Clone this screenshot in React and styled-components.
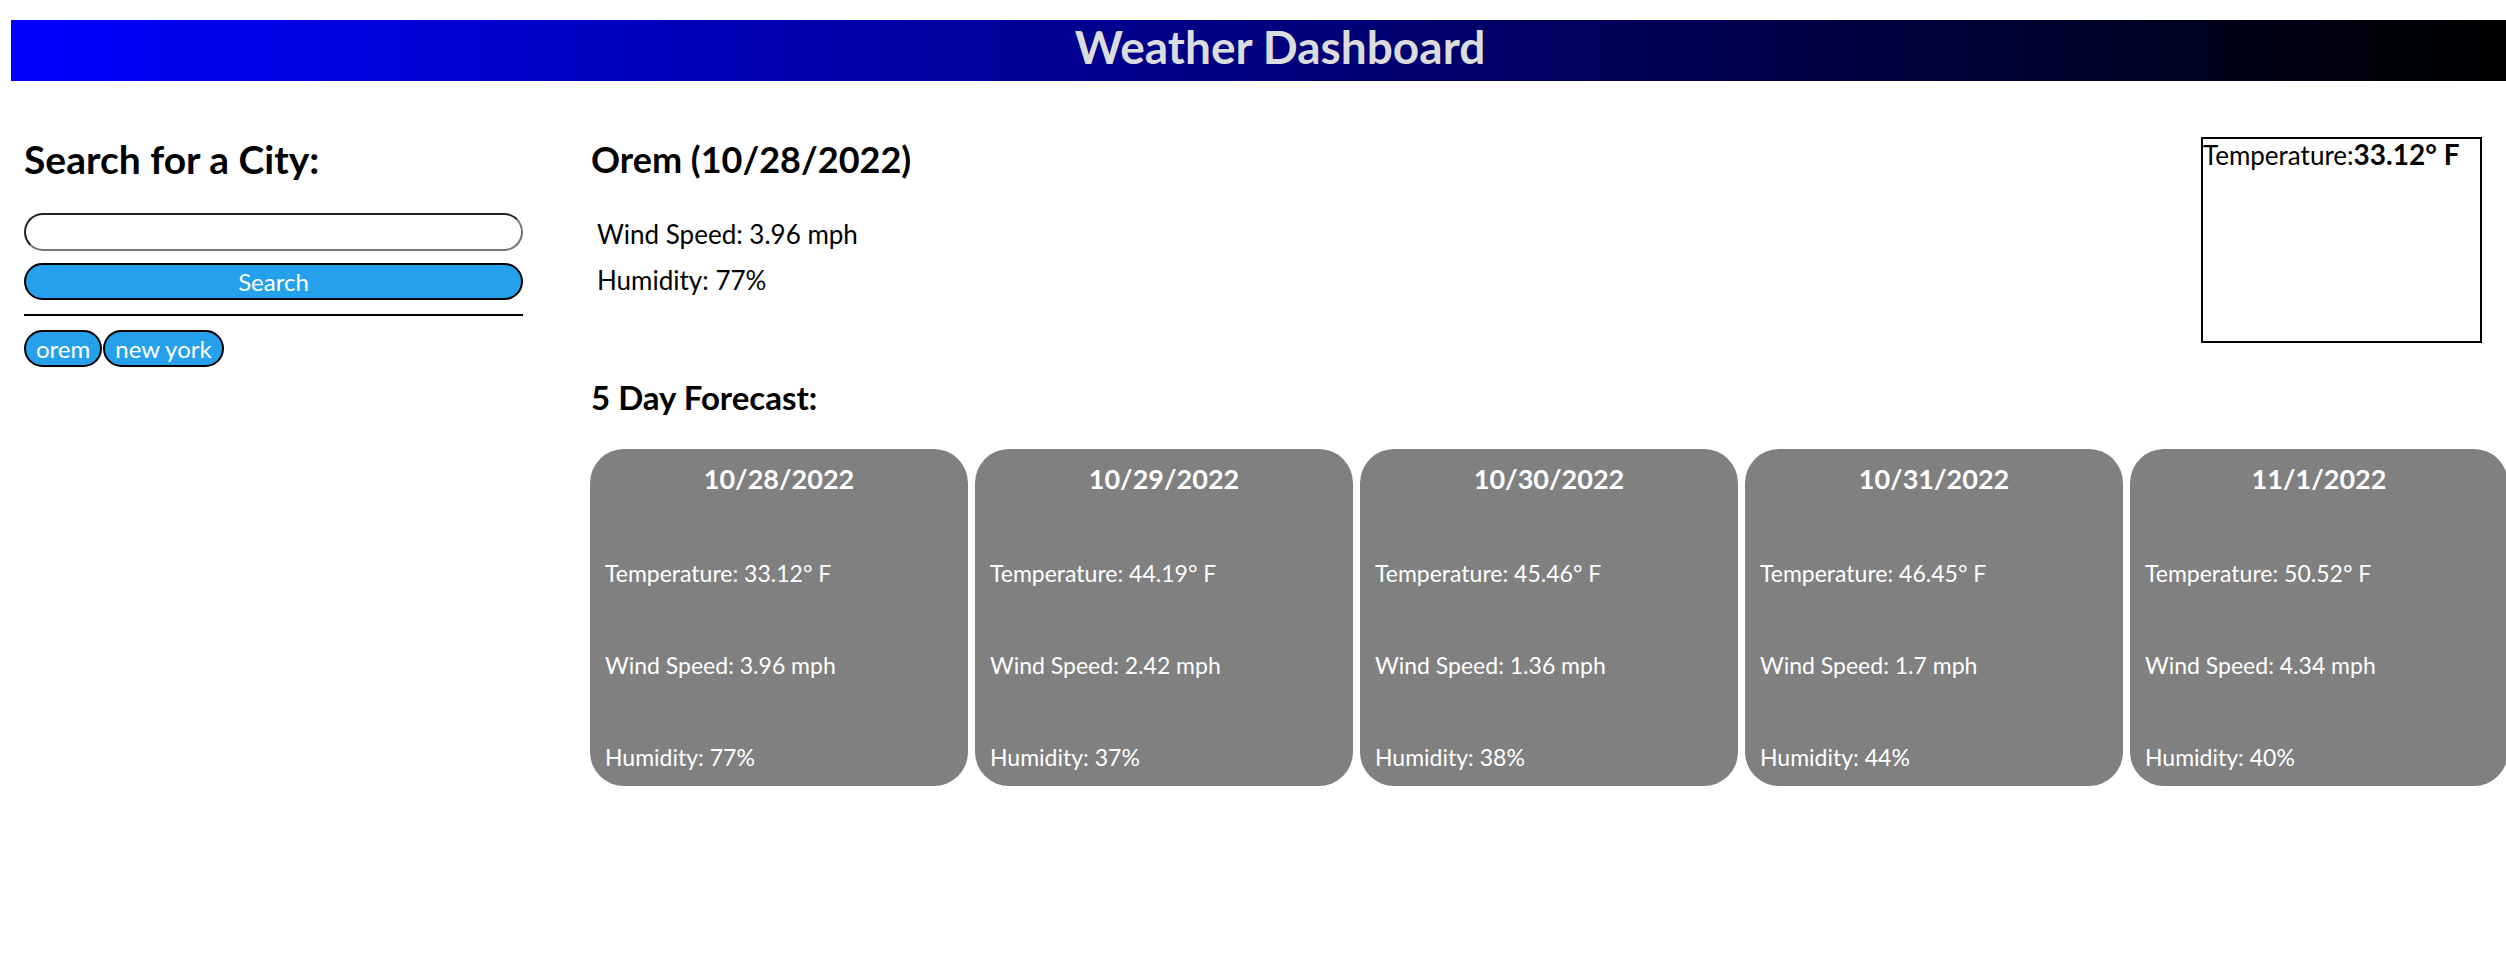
import React from "react";
import styled, { createGlobalStyle } from "styled-components";

const Global = createGlobalStyle`
  html, body { margin: 0; padding: 0; background: #fff; overflow-x: hidden; }
  body { font-family: Lato, "Open Sans", sans-serif; color: #000; }
`;

const Page = styled.div`
  width: 2506px;
`;

const Header = styled.header`
  margin: 20px 0 0 11px;
  height: 61px;
  padding: 0 0 8px 43px;
  box-sizing: border-box;
  background: linear-gradient(to right, #0000ff, #000000);
  display: flex;
  align-items: center;
  justify-content: center;
`;

const Title = styled.h1`
  margin: 0;
  font-size: 46px;
  font-weight: 700;
  line-height: 1;
  color: #dcdcdc;
`;

const Content = styled.main`
  display: flex;
  align-items: flex-start;
  padding: 57px 0 0 24px;
`;

const Sidebar = styled.aside`
  width: 499px;
  flex-shrink: 0;
  display: flex;
  flex-direction: column;
`;

const Heading = styled.h2`
  margin: 0;
  font-size: ${(p) => p.$size || 36}px;
  line-height: 43px;
  font-weight: 700;
`;

const SearchInput = styled.input`
  margin-top: 32px;
  height: 38px;
  box-sizing: border-box;
  border: 2px inset #767676;
  border-radius: 19px;
  font-family: inherit;
  font-size: 22px;
  padding: 0 14px;
  outline: none;
`;

const PillButton = styled.button`
  box-sizing: border-box;
  height: 37px;
  background: #25a0eb;
  color: #fff;
  border: 2px solid #000;
  border-radius: 19px;
  font-family: inherit;
  font-size: 24px;
  line-height: 1;
  padding: ${(p) => (p.$wide ? "0" : "0 10px")};
  cursor: pointer;
`;

const SearchButton = styled(PillButton)`
  margin-top: 12px;
  width: 100%;
`;

const Divider = styled.hr`
  margin: 14px 0 0;
  border: none;
  height: 2px;
  background: #000;
`;

const History = styled.div`
  display: flex;
  gap: 1px;
  margin-top: 14px;
`;

const Main = styled.section`
  margin-left: 67px;
  flex: 1;
  min-width: 0;
  display: flex;
  flex-direction: column;
`;

const TopRow = styled.div`
  display: flex;
  justify-content: space-between;
  align-items: flex-start;
  padding-right: 24px;
`;

const Current = styled.div`
  display: flex;
  flex-direction: column;
  padding-left: 1px;
`;

const InfoList = styled.div`
  display: flex;
  flex-direction: column;
  gap: 15px;
  margin-top: 38px;
  padding-left: 6px;
`;

const Info = styled.p`
  margin: 0;
  font-size: 26px;
  line-height: 31px;
`;

const TempBox = styled.div`
  margin-top: -1px;
  width: 281px;
  height: 206px;
  box-sizing: border-box;
  border: 2px solid #000;
  font-size: 26px;
  line-height: 31px;
`;

const TempValue = styled.strong`
  font-size: 28px;
  font-weight: 700;
`;

const SubHeading = styled.h3`
  margin: 35px 0 0 1px;
  font-size: 33px;
  line-height: 38px;
  font-weight: 700;
`;

const CardRow = styled.div`
  display: flex;
  gap: 7px;
  margin-top: 33px;
`;

const Card = styled.div`
  flex-shrink: 0;
  width: 378px;
  height: 337px;
  box-sizing: border-box;
  background: #808080;
  color: #fff;
  border-radius: 34px;
  padding: 13px 15px 15px;
  display: flex;
  flex-direction: column;
  justify-content: space-between;
`;

const CardDate = styled.h4`
  margin: 0;
  text-align: center;
  font-size: 27px;
  line-height: 33px;
  font-weight: 700;
`;

const CardLine = styled.p`
  margin: 0;
  font-size: 23px;
  line-height: 27px;
`;

const forecast = [
  { date: "10/28/2022", temp: "33.12", wind: "3.96", hum: "77" },
  { date: "10/29/2022", temp: "44.19", wind: "2.42", hum: "37" },
  { date: "10/30/2022", temp: "45.46", wind: "1.36", hum: "38" },
  { date: "10/31/2022", temp: "46.45", wind: "1.7", hum: "44" },
  { date: "11/1/2022", temp: "50.52", wind: "4.34", hum: "40" },
];

export default function App() {
  return (
    <Page>
      <Global />
      <Header>
        <Title>Weather Dashboard</Title>
      </Header>
      <Content>
        <Sidebar>
          <Heading $size={39}>Search for a City:</Heading>
          <SearchInput type="text" />
          <SearchButton $wide>Search</SearchButton>
          <Divider />
          <History>
            <PillButton>orem</PillButton>
            <PillButton>new york</PillButton>
          </History>
        </Sidebar>
        <Main>
          <TopRow>
            <Current>
              <Heading $size={36}>Orem (10/28/2022)</Heading>
              <InfoList>
                <Info>Wind Speed: 3.96 mph</Info>
                <Info>Humidity: 77%</Info>
              </InfoList>
            </Current>
            <TempBox>
              Temperature:<TempValue>33.12° F</TempValue>
            </TempBox>
          </TopRow>
          <SubHeading>5 Day Forecast:</SubHeading>
          <CardRow>
            {forecast.map((d) => (
              <Card key={d.date}>
                <CardDate>{d.date}</CardDate>
                <CardLine>Temperature: {d.temp}° F</CardLine>
                <CardLine>Wind Speed: {d.wind} mph</CardLine>
                <CardLine>Humidity: {d.hum}%</CardLine>
              </Card>
            ))}
          </CardRow>
        </Main>
      </Content>
    </Page>
  );
}
